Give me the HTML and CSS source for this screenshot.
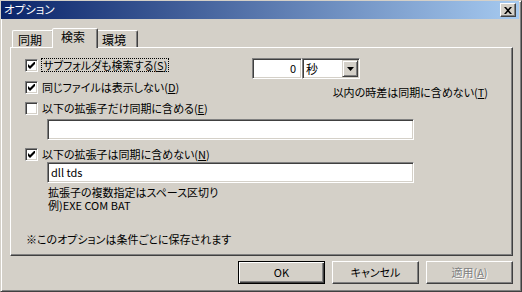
FILE: index.html
```html
<!DOCTYPE html>
<html lang="ja">
<head>
<meta charset="UTF-8">
<title>オプション</title>
<link rel="stylesheet" href="styles.css">
</head>
<body>
<div class="window">
    <div class="titlebar">
        <span class="title">オプション</span>
        <span class="close">
            <svg width="8" height="7" viewBox="0 0 8 7"><path d="M0 0h2l2 2.2L6 0h2L5 3.5 8 7H6L4 4.8 2 7H0l3-3.5z" fill="#000"/></svg>
        </span>
    </div>

    <div class="content">
        <div class="tabs">
            <div class="tab">同期</div>
            <div class="tab active">検索</div>
            <div class="tab">環境</div>
        </div>

        <div class="panel">
            <div class="top">
                <div class="checks">
                    <div class="check">
                        <span class="box"><svg width="7" height="7" viewBox="0 0 7 7"><polygon points="0,2 2,4 7,-1 7,2 2,7 0,5" fill="#000"/></svg></span>
                        <span class="focus">サブフォルダも検索する(<u>S</u>)</span>
                    </div>
                    <div class="check">
                        <span class="box"><svg width="7" height="7" viewBox="0 0 7 7"><polygon points="0,2 2,4 7,-1 7,2 2,7 0,5" fill="#000"/></svg></span>
                        <span>同じファイルは表示しない(<u>D</u>)</span>
                    </div>
                    <div class="check short">
                        <span class="box"></span>
                        <span>以下の拡張子だけ同期に含める(<u>E</u>)</span>
                    </div>
                </div>

                <div class="time">
                    <div class="spin">
                        <span class="num">0</span>
                        <span class="select">
                            <span class="sel-text">秒</span>
                            <span class="drop"><svg width="7" height="4" viewBox="0 0 7 4"><polygon points="0,0 7,0 3.5,4" fill="#000"/></svg></span>
                        </span>
                    </div>
                    <div class="time-label">以内の時差は同期に含めない(<u>T</u>)</div>
                </div>
            </div>

            <div class="field first"></div>

            <div class="check mid">
                <span class="box"><svg width="7" height="7" viewBox="0 0 7 7"><polygon points="0,2 2,4 7,-1 7,2 2,7 0,5" fill="#000"/></svg></span>
                <span>以下の拡張子は同期に含めない(<u>N</u>)</span>
            </div>

            <div class="field">dll tds</div>

            <div class="hint">
                <div>拡張子の複数指定はスペース区切り</div>
                <div>例)EXE COM BAT</div>
            </div>

            <div class="note">※このオプションは条件ごとに保存されます</div>
        </div>

        <div class="actions">
            <span class="btn default">OK</span>
            <span class="btn">キャンセル</span>
            <span class="btn disabled">適用(<u>A</u>)</span>
        </div>
    </div>
</div>
</body>
</html>
```

FILE: styles.css
```css
body {
    margin: 0;
    font-family: "Noto Sans CJK JP", "Liberation Sans", sans-serif;
    font-size: 11px;
    line-height: 1;
    font-feature-settings: "palt";
    color: #000;
    background-color: #d4d0c8;
}

.window {
    width: 522px;
    height: 292px;
    box-sizing: border-box;
    border: 1px solid;
    border-color: #d4d0c8 #404040 #404040 #d4d0c8;
    box-shadow: inset 1px 1px #fff, inset -1px -1px #808080;
    padding: 0 2px 2px 0;
    background-color: #d4d0c8;
}

.titlebar {
    height: 18px;
    display: flex;
    align-items: center;
    padding: 0 3px 0 3px;
    background: linear-gradient(to right, #0a246a, #a6caf0);
}

.title {
    color: #fff;
    font-size: 11.5px;
}

.close {
    margin-left: auto;
    width: 16px;
    height: 14px;
    box-sizing: border-box;
    display: flex;
    align-items: center;
    justify-content: center;
    background-color: #d4d0c8;
    border: 1px solid;
    border-color: #fff #404040 #404040 #fff;
    box-shadow: inset -1px -1px #808080;
}

.content {
    padding: 0 6px 0 9px;
}

.tabs {
    display: flex;
    align-items: flex-end;
    height: 19px;
    margin-top: 9px;
    padding-left: 2px;
}

.tab {
    width: 42px;
    height: 17px;
    box-sizing: border-box;
    padding: 3px 0 0 5px;
    border: 1px solid;
    border-bottom: none;
    border-color: #fff #404040 transparent #fff;
    border-radius: 2px 2px 0 0;
    box-shadow: inset -1px 0 #808080;
    font-size: 12px;
}

.tab.active {
    position: relative;
    z-index: 1;
    width: 46px;
    height: 20px;
    margin: 0 -2px -1px;
    padding: 2px 0 0 8px;
    background-color: #d4d0c8;
}

.panel {
    height: 209px;
    box-sizing: border-box;
    border: 1px solid;
    border-color: #fff #404040 #404040 #fff;
    box-shadow: inset -1px -1px #808080;
    padding: 6px 24px 0 14px;
}

.top {
    display: flex;
}

.check {
    display: flex;
    align-items: center;
    gap: 4px;
    height: 22px;
}

.check.short {
    height: 20px;
}

.check.mid {
    height: 16px;
    margin-top: 6px;
}

.box {
    width: 13px;
    height: 13px;
    box-sizing: border-box;
    display: flex;
    align-items: center;
    justify-content: center;
    background-color: #fff;
    border: 1px solid;
    border-color: #808080 #fff #fff #808080;
    box-shadow: inset 1px 1px #404040, inset -1px -1px #d4d0c8;
}

.focus {
    outline: 1px dotted #000;
    padding: 1px 1px 0;
}

.time {
    margin-left: auto;
    width: 236px;
    padding-top: 4px;
}

.spin {
    display: flex;
}

.num,
.select,
.field {
    height: 21px;
    box-sizing: border-box;
    background-color: #fff;
    border: 1px solid;
    border-color: #808080 #fff #fff #808080;
    box-shadow: inset 1px 1px #404040, inset -1px -1px #d4d0c8;
}

.num {
    width: 50px;
    text-align: right;
    padding: 4px 5px 0 0;
}

.select {
    width: 58px;
    display: flex;
    padding: 1px;
}

.sel-text {
    flex: 1;
    padding: 3px 0 0 2px;
    font-size: 12px;
}

.drop {
    width: 16px;
    height: 17px;
    box-sizing: border-box;
    display: flex;
    align-items: center;
    justify-content: center;
    background-color: #d4d0c8;
    border: 1px solid;
    border-color: #d4d0c8 #404040 #404040 #d4d0c8;
    box-shadow: inset 1px 1px #fff, inset -1px -1px #808080;
}

.time-label {
    margin-top: 7px;
    text-align: right;
    line-height: 13px;
}

.field {
    width: 367px;
    margin-left: 22px;
    padding: 4px 0 0 3px;
}

.field.first {
    margin-top: 1px;
}

.hint {
    margin: 3px 0 0 23px;
    line-height: 13px;
}

.note {
    margin: 21px 0 0 1px;
    line-height: 13px;
}

.actions {
    display: flex;
    justify-content: flex-end;
    gap: 7px;
    margin-top: 5px;
}

.btn {
    width: 87px;
    height: 23px;
    box-sizing: border-box;
    display: flex;
    align-items: center;
    justify-content: center;
    border: 1px solid;
    border-color: #fff #404040 #404040 #fff;
    box-shadow: inset -1px -1px #808080;
}

.btn.default {
    border-color: #000;
    box-shadow: inset 1px 1px #fff, inset -1px -1px #404040, inset -2px -2px #808080;
}

.btn.disabled {
    color: #808080;
    text-shadow: 1px 1px #fff;
}
```
